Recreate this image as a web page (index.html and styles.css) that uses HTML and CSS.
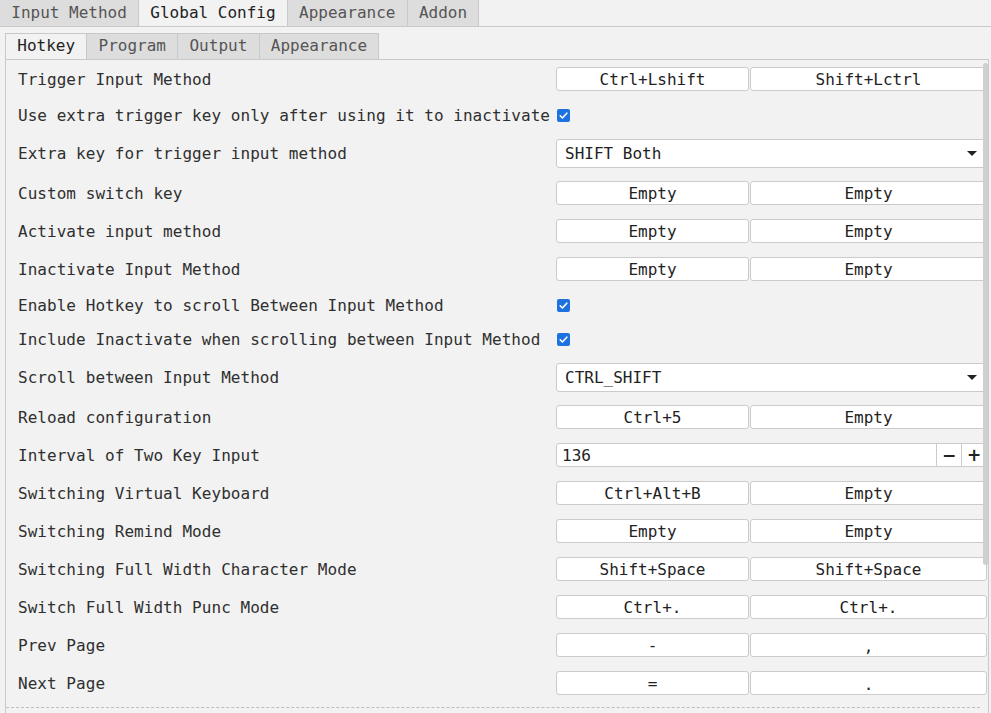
FILE: index.html
```html
<!DOCTYPE html>
<html>
<head>
<meta charset="utf-8">
<link rel="stylesheet" href="styles.css">
</head>
<body>
<div class="tabbar">
  <div class="tab">Input Method</div>
  <div class="tab active">Global Config</div>
  <div class="tab">Appearance</div>
  <div class="tab">Addon</div>
</div>
<div class="page">
  <div class="subtabs">
    <div class="stab active">Hotkey</div>
    <div class="stab">Program</div>
    <div class="stab">Output</div>
    <div class="stab">Appearance</div>
  </div>
  <div class="frame">
    <div class="scrollthumb"></div>
    <div class="rows">
      <div class="row btnrow"><span class="label">Trigger Input Method</span><div class="ctrl"><span class="key k1">Ctrl+Lshift</span><span class="key k2">Shift+Lctrl</span></div></div>
      <div class="row chkrow"><span class="label">Use extra trigger key only after using it to inactivate</span><div class="chkcell"><span class="check"><svg viewBox="0 0 13 13" width="13" height="13"><path d="M3.2 6.8 L5.4 9 L9.8 4.2" fill="none" stroke="#fff" stroke-width="1.6" stroke-linecap="round" stroke-linejoin="round"/></svg></span></div></div>
      <div class="row comborow"><span class="label">Extra key for trigger input method</span><div class="combo"><span>SHIFT Both</span><span class="arrow"></span></div></div>
      <div class="row btnrow"><span class="label">Custom switch key</span><div class="ctrl"><span class="key k1">Empty</span><span class="key k2">Empty</span></div></div>
      <div class="row btnrow"><span class="label">Activate input method</span><div class="ctrl"><span class="key k1">Empty</span><span class="key k2">Empty</span></div></div>
      <div class="row btnrow"><span class="label">Inactivate Input Method</span><div class="ctrl"><span class="key k1">Empty</span><span class="key k2">Empty</span></div></div>
      <div class="row chkrow"><span class="label">Enable Hotkey to scroll Between Input Method</span><div class="chkcell"><span class="check"><svg viewBox="0 0 13 13" width="13" height="13"><path d="M3.2 6.8 L5.4 9 L9.8 4.2" fill="none" stroke="#fff" stroke-width="1.6" stroke-linecap="round" stroke-linejoin="round"/></svg></span></div></div>
      <div class="row chkrow"><span class="label">Include Inactivate when scrolling between Input Method</span><div class="chkcell"><span class="check"><svg viewBox="0 0 13 13" width="13" height="13"><path d="M3.2 6.8 L5.4 9 L9.8 4.2" fill="none" stroke="#fff" stroke-width="1.6" stroke-linecap="round" stroke-linejoin="round"/></svg></span></div></div>
      <div class="row comborow"><span class="label">Scroll between Input Method</span><div class="combo"><span>CTRL_SHIFT</span><span class="arrow"></span></div></div>
      <div class="row btnrow"><span class="label">Reload configuration</span><div class="ctrl"><span class="key k1">Ctrl+5</span><span class="key k2">Empty</span></div></div>
      <div class="row btnrow"><span class="label">Interval of Two Key Input</span><div class="spin"><span class="spinval">136</span><span class="spinbtn">−</span><span class="spinbtn">+</span></div></div>
      <div class="row btnrow"><span class="label">Switching Virtual Keyboard</span><div class="ctrl"><span class="key k1">Ctrl+Alt+B</span><span class="key k2">Empty</span></div></div>
      <div class="row btnrow"><span class="label">Switching Remind Mode</span><div class="ctrl"><span class="key k1">Empty</span><span class="key k2">Empty</span></div></div>
      <div class="row btnrow"><span class="label">Switching Full Width Character Mode</span><div class="ctrl"><span class="key k1">Shift+Space</span><span class="key k2">Shift+Space</span></div></div>
      <div class="row btnrow"><span class="label">Switch Full Width Punc Mode</span><div class="ctrl"><span class="key k1">Ctrl+.</span><span class="key k2">Ctrl+.</span></div></div>
      <div class="row btnrow"><span class="label">Prev Page</span><div class="ctrl"><span class="key k1">-</span><span class="key k2 low">,</span></div></div>
      <div class="row btnrow"><span class="label">Next Page</span><div class="ctrl"><span class="key k1">=</span><span class="key k2 low">.</span></div></div>
    </div>
    <div class="dashed"></div>
  </div>
</div>
</body>
</html>
```
FILE: styles.css
```css
html, body {
  margin: 0;
  padding: 0;
  height: 713px;
  overflow: hidden;
  background: #f2f2f2;
}
body {
  font-family: "DejaVu Sans Mono", "Liberation Mono", monospace;
  font-size: 16px;
  color: #2f2f2f;
}
.tabbar {
  display: flex;
  height: 26px;
  border-bottom: 1px solid #c9c9c9;
}
.tab {
  padding: 0 11.25px;
  line-height: 26px;
  background: #dddddd;
  color: #555;
  border-right: 1px solid #c9c9c9;
}
.tab.active {
  background: #f2f2f2;
  color: #222;
}
.page {
  padding: 6px 2px 0 5px;
  display: flex;
  flex-direction: column;
}
.subtabs {
  display: flex;
  height: 26px;
}
.stab {
  padding: 0 11.25px;
  line-height: 24px;
  background: #dddddd;
  color: #555;
  border: 1px solid #c9c9c9;
  border-left: none;
  border-bottom: none;
}
.stab:first-child {
  border-left: 1px solid #c9c9c9;
}
.stab.active {
  background: #f2f2f2;
  color: #222;
}
.frame {
  position: relative;
  border-top: 1px solid #c9c9c9;
  border-left: 1px solid #c9c9c9;
  border-right: 1px solid #c9c9c9;
  height: 660px;
}
.scrollthumb {
  position: absolute;
  right: 0;
  top: 3px;
  width: 5px;
  height: 502px;
  background: #cfcfcf;
  border-radius: 3px;
}
.rows {
  display: flex;
  flex-direction: column;
  padding: 0 1px 0 12px;
}
.row {
  display: flex;
  align-items: center;
}
.btnrow { height: 38px; }
.chkrow { height: 34px; }
.comborow { height: 42px; }
.label {
  flex: 1;
  white-space: nowrap;
  letter-spacing: 0.04px;
}
.chkcell {
  width: 430px;
  padding-left: 1px;
  display: flex;
}
.ctrl {
  display: flex;
  gap: 1px;
}
.key {
  box-sizing: border-box;
  height: 24px;
  line-height: 24px;
  background: #fff;
  border: 1px solid #cbcbcb;
  border-radius: 3px;
  text-align: center;
  color: #222;
}
.key.low { line-height: 26px; }
.k1 { width: 193px; }
.k2 { width: 237px; }
.check {
  width: 13px;
  height: 13px;
  background: #1e72e0;
  border-radius: 2px;
  display: flex;
  margin-top: 1px;
}
.combo {
  box-sizing: border-box;
  width: 431px;
  height: 29px;
  margin-top: 1px;
  background: #fff;
  border: 1px solid #cbcbcb;
  border-radius: 3px;
  display: flex;
  align-items: center;
  justify-content: space-between;
  padding: 0 9px 0 8px;
  color: #222;
}
.arrow {
  width: 0;
  height: 0;
  border-left: 5px solid transparent;
  border-right: 5px solid transparent;
  border-top: 5px solid #222;
}
.spin {
  box-sizing: border-box;
  width: 431px;
  height: 24px;
  background: #fff;
  border: 1px solid #cbcbcb;
  border-radius: 3px;
  display: flex;
  align-items: stretch;
  color: #222;
}
.spinval {
  flex: 1;
  padding-left: 5px;
  line-height: 23px;
}
.spinbtn {
  width: 24px;
  border-left: 1px solid #cbcbcb;
  text-align: center;
  line-height: 22px;
  font-family: "DejaVu Sans", sans-serif;
  font-weight: bold;
  font-size: 17px;
  color: #222;
}
.dashed {
  margin: 5px 8px 0 0;
  border-top: 1px dashed #bdbdbd;
}
```
